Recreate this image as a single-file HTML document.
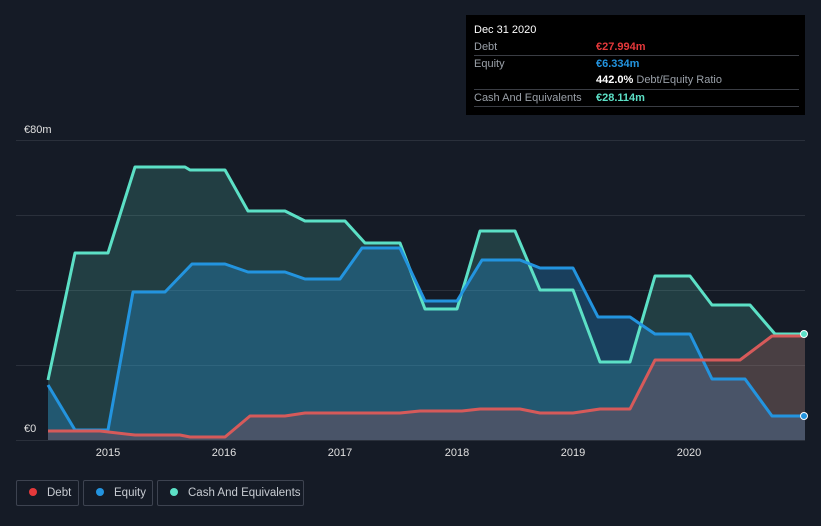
<!DOCTYPE html>
<html><head><style>
body{margin:0;width:821px;height:526px;background:#151b26;font-family:"Liberation Sans",sans-serif;overflow:hidden;position:relative}
.tt{position:absolute;left:466px;top:15px;width:339px;height:100px;background:#000;font-size:11px}
.row{position:absolute;left:8px;right:6px;border-bottom:1px solid #3a3d44;height:16px}
.l{position:absolute;left:0;color:#9aa0a8}.v{position:absolute;left:122px;font-weight:bold;white-space:nowrap}
.leg{position:absolute;top:480px;height:26px;border:1px solid #3d4350;border-radius:2px;color:#c8ccd2;font-size:11.5px;line-height:25px;box-sizing:border-box;white-space:nowrap}
.dot{display:inline-block;width:8px;height:8px;border-radius:50%;margin:0 10px 0 12px;vertical-align:0}
</style></head><body>
<svg width="821" height="526" style="position:absolute;left:0;top:0">
<g stroke="#2a303b" stroke-width="1"><line x1="16" y1="140.5" x2="805" y2="140.5"/><line x1="16" y1="215.5" x2="805" y2="215.5"/><line x1="16" y1="290.5" x2="805" y2="290.5"/><line x1="16" y1="365.5" x2="805" y2="365.5"/><line x1="16" y1="440.5" x2="805" y2="440.5"/></g>
<text x="24" y="133" fill="#e0e0e0" font-size="11">€80m</text>
<text x="24" y="432" fill="#e0e0e0" font-size="11">€0</text>
<g fill="#e0e0e0" font-size="11" text-anchor="middle"><text x="108" y="456">2015</text><text x="224" y="456">2016</text><text x="340" y="456">2017</text><text x="457" y="456">2018</text><text x="573" y="456">2019</text><text x="689" y="456">2020</text></g>
<path d="M48,380 L75,253 108,253 135,167 185,167 190,170 225,170 248,211 285,211 305,221 345,221 365,243 400,243 425,309 457,309 480,231 515,231 540,290 573,290 600,362 630,362 655,276 690,276 712,305 750,305 775,334 805,334 L805,440 48,440Z" fill="#5ce0c6" fill-opacity="0.18"/>
<path d="M48,385 L75,430 108,430 133,292 165,292 192,264 225,264 248,272 285,272 305,279 340,279 362,248 400,248 425,301 457,301 482,260 520,260 540,268 573,268 598,317 630,317 655,334 690,334 712,379 745,379 772,416 805,416 L805,440 48,440Z" fill="#2394df" fill-opacity="0.3"/>
<path d="M48,431 L100,431 135,435 180,435 190,437 225,437 250,416 285,416 305,413 400,413 420,411 462,411 480,409 520,409 540,413 573,413 600,409 630,409 655,360 690,360 740,360 772,336 805,336 L805,440 48,440Z" fill="#e64646" fill-opacity="0.2"/>
<g fill="none" stroke-width="3" stroke-linejoin="round">
<path d="M48,380 L75,253 108,253 135,167 185,167 190,170 225,170 248,211 285,211 305,221 345,221 365,243 400,243 425,309 457,309 480,231 515,231 540,290 573,290 600,362 630,362 655,276 690,276 712,305 750,305 775,334 805,334" stroke="#5ce0c6"/>
<path d="M48,385 L75,430 108,430 133,292 165,292 192,264 225,264 248,272 285,272 305,279 340,279 362,248 400,248 425,301 457,301 482,260 520,260 540,268 573,268 598,317 630,317 655,334 690,334 712,379 745,379 772,416 805,416" stroke="#2394df"/>
<path d="M48,431 L100,431 135,435 180,435 190,437 225,437 250,416 285,416 305,413 400,413 420,411 462,411 480,409 520,409 540,413 573,413 600,409 630,409 655,360 690,360 740,360 772,336 805,336" stroke="#d65a5a"/>
</g>
<circle cx="804" cy="334" r="3.5" fill="#5ce0c6" stroke="#fff" stroke-width="1"/>
<circle cx="804" cy="416" r="3.5" fill="#2394df" stroke="#fff" stroke-width="1"/>
</svg>
<div class="tt">
<div style="position:absolute;left:8px;top:9px;color:#fff">Dec 31 2020</div>
<div class="row" style="top:24px"><span class="l" style="top:2px">Debt</span><span class="v" style="top:2px;color:#e5393b">€27.994m</span></div>
<div class="row" style="top:41px;border:none"><span class="l" style="top:2px">Equity</span><span class="v" style="top:2px;color:#2394df">€6.334m</span></div>
<div class="row" style="top:58px"><span class="v" style="top:1px;color:#fff">442.0% <span style="color:#9aa0a8;font-weight:normal">Debt/Equity Ratio</span></span></div>
<div class="row" style="top:75px"><span class="l" style="top:2px">Cash And Equivalents</span><span class="v" style="top:2px;color:#5ce0c6">€28.114m</span></div>
</div>
<div class="leg" style="left:16px;width:63px"><span class="dot" style="background:#e5393b"></span>Debt</div>
<div class="leg" style="left:83px;width:70px"><span class="dot" style="background:#2394df"></span>Equity</div>
<div class="leg" style="left:157px;width:147px"><span class="dot" style="background:#5ce0c6"></span>Cash And Equivalents</div>
</body></html>
